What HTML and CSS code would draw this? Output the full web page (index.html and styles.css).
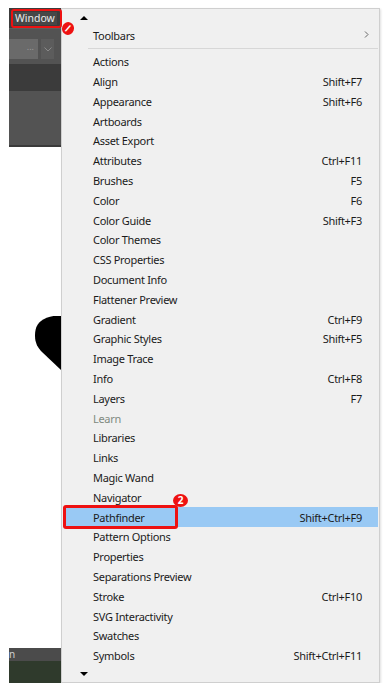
FILE: index.html
```html
<!DOCTYPE html>
<html lang="en">
<head>
    <meta charset="UTF-8">
    <meta name="viewport" content="width=device-width, initial-scale=1.0">
    <title>Window Menu</title>
    <link rel="stylesheet" href="styles.css">
</head>
<body>
    <div class="screen">
        <div class="app">
            <div class="app-top">
                <div class="menubar">
                    <span class="menubar-item">Window</span>
                </div>
                <div class="control-bar">
                    <div class="dropdown">...</div>
                    <div class="dropdown-caret">
                        <svg width="8" height="5" viewBox="0 0 8 5"><path d="M0.5 0.5 L4 4 L7.5 0.5" fill="none" stroke="#8a8a8a" stroke-width="1"/></svg>
                    </div>
                </div>
                <div class="dark-band"></div>
                <div class="panel-band"></div>
            </div>
            <div class="canvas">
                <svg class="heart" width="26" height="56" viewBox="0 0 26 56">
                    <path d="M26 0 C 19 -1 11 1 6 5 C 1 9 0 14 0 20 C 0 27 3 32 7 36 L 26 54 Z" fill="#000"/>
                </svg>
            </div>
            <div class="app-bottom">
                <div class="status-bar">n</div>
                <div class="dock"></div>
            </div>
        </div>

        <div class="menu">
            <div class="scroll-arrow"><span class="tri-up"></span></div>
            <div class="menu-item">
                <span class="label">Toolbars</span>
                <svg class="submenu" width="5" height="7" viewBox="0 0 5 7"><path d="M1 0.5 L4 3.5 L1 6.5" fill="none" stroke="#666" stroke-width="1"/></svg>
            </div>
            <div class="separator"></div>
            <div class="menu-item"><span class="label">Actions</span></div>
            <div class="menu-item"><span class="label">Align</span><span class="key">Shift+F7</span></div>
            <div class="menu-item"><span class="label">Appearance</span><span class="key">Shift+F6</span></div>
            <div class="menu-item"><span class="label">Artboards</span></div>
            <div class="menu-item"><span class="label">Asset Export</span></div>
            <div class="menu-item"><span class="label">Attributes</span><span class="key">Ctrl+F11</span></div>
            <div class="menu-item"><span class="label">Brushes</span><span class="key">F5</span></div>
            <div class="menu-item"><span class="label">Color</span><span class="key">F6</span></div>
            <div class="menu-item"><span class="label">Color Guide</span><span class="key">Shift+F3</span></div>
            <div class="menu-item"><span class="label">Color Themes</span></div>
            <div class="menu-item"><span class="label">CSS Properties</span></div>
            <div class="menu-item"><span class="label">Document Info</span></div>
            <div class="menu-item"><span class="label">Flattener Preview</span></div>
            <div class="menu-item"><span class="label">Gradient</span><span class="key">Ctrl+F9</span></div>
            <div class="menu-item"><span class="label">Graphic Styles</span><span class="key">Shift+F5</span></div>
            <div class="menu-item"><span class="label">Image Trace</span></div>
            <div class="menu-item"><span class="label">Info</span><span class="key">Ctrl+F8</span></div>
            <div class="menu-item"><span class="label">Layers</span><span class="key">F7</span></div>
            <div class="menu-item disabled"><span class="label">Learn</span></div>
            <div class="menu-item"><span class="label">Libraries</span></div>
            <div class="menu-item"><span class="label">Links</span></div>
            <div class="menu-item"><span class="label">Magic Wand</span></div>
            <div class="menu-item"><span class="label">Navigator</span></div>
            <div class="menu-item active"><span class="label">Pathfinder</span><span class="key">Shift+Ctrl+F9</span></div>
            <div class="menu-item"><span class="label">Pattern Options</span></div>
            <div class="menu-item"><span class="label">Properties</span></div>
            <div class="menu-item"><span class="label">Separations Preview</span></div>
            <div class="menu-item"><span class="label">Stroke</span><span class="key">Ctrl+F10</span></div>
            <div class="menu-item"><span class="label">SVG Interactivity</span></div>
            <div class="menu-item"><span class="label">Swatches</span></div>
            <div class="menu-item"><span class="label">Symbols</span><span class="key">Shift+Ctrl+F11</span></div>
            <div class="scroll-arrow"><span class="tri-down"></span></div>
        </div>

        <!-- red annotations drawn on top of the screenshot -->
        <div class="mark-box mark-window"></div>
        <div class="mark-dot mark-one"><span>/</span></div>
        <div class="mark-box mark-path"></div>
        <div class="mark-dot mark-two"><span>2</span></div>
    </div>
</body>
</html>
```

FILE: styles.css
```css
body {
    margin: 0;
    background: #fff;
    font-family: "Noto Sans", "Open Sans", sans-serif;
}

.screen {
    position: relative;
    display: flex;
    padding: 8px 0 0 9px;
}

/* background app */
.app {
    width: 52px;
    height: 675px;
    display: flex;
    flex-direction: column;
}

.app-top {
    display: flex;
    flex-direction: column;
    height: 139px;
    background: #535353;
}

.menubar {
    display: flex;
    align-items: flex-start;
    height: 21px;
    background: #3c3c3c;
    border-bottom: 1px solid #5e5e5e;
    padding: 4px 0 0 4px;
    box-sizing: border-box;
}

.menubar-item {
    font-size: 10.5px;
    line-height: 13px;
    color: #ececec;
    background: #474747;
    padding: 0 2px;
}

.control-bar {
    display: flex;
    gap: 3px;
    height: 35px;
    padding-top: 10px;
    box-sizing: border-box;
}

.dropdown {
    width: 29px;
    height: 20px;
    background: #6a6a6a;
    color: #9a9a9a;
    font-size: 9px;
    line-height: 16px;
    text-align: right;
    padding-right: 4px;
    box-sizing: border-box;
}

.dropdown-caret {
    width: 13px;
    height: 20px;
    background: #5c5c5c;
    display: flex;
    align-items: center;
    justify-content: center;
}

.dark-band {
    height: 27px;
    background: #3b3b3b;
}

.panel-band {
    flex: 1;
    border-bottom: 2px solid #3a3a3a;
}

.canvas {
    flex: 1;
    display: flex;
    justify-content: flex-end;
    align-items: flex-start;
}

.heart {
    margin-top: 169px;
}

.app-bottom {
    height: 35px;
    display: flex;
    flex-direction: column;
}

.status-bar {
    height: 13px;
    background: #4b4b4b;
    color: #cfcfcf;
    font-size: 10px;
    line-height: 13px;
}

.dock {
    flex: 1;
    background: #2f3a2c;
}

/* window menu */
.menu {
    width: 319px;
    height: 675px;
    background: #f0f0f0;
    border: 1px solid #cfcfcf;
    box-sizing: border-box;
    box-shadow: 1px 1px 2px rgba(0, 0, 0, 0.12);
}

.scroll-arrow {
    height: 17px;
    padding-left: 18px;
    display: flex;
    align-items: center;
}

.tri-up {
    width: 0;
    height: 0;
    border-left: 4px solid transparent;
    border-right: 4px solid transparent;
    border-bottom: 4px solid #000;
}

.tri-down {
    width: 0;
    height: 0;
    border-left: 4px solid transparent;
    border-right: 4px solid transparent;
    border-top: 4px solid #000;
}

.menu-item {
    display: flex;
    align-items: center;
    height: 19.8px;
    margin: 0 1px;
    padding: 0 16px 0 30px;
    font-size: 11px;
    letter-spacing: -0.3px;
    color: #1b1b1b;
}

.menu-item:first-of-type {
    height: 20px;
}

.label {
    flex: 1;
}

.submenu {
    margin: -2px -7px 0 0;
}

.disabled {
    color: #7f8a80;
}

.active {
    background: #99c9f4;
}

.separator {
    height: 6px;
    display: flex;
    align-items: center;
    padding: 0 1px 0 26px;
}

.separator::after {
    content: "";
    flex: 1;
    height: 1px;
    background: #d7d7d7;
}

/* annotations */
.mark-box {
    position: absolute;
    border: 2px solid #ee1111;
    border-radius: 3px;
}

.mark-window {
    left: 11px;
    top: 9px;
    width: 47px;
    height: 15px;
}

.mark-path {
    left: 63px;
    top: 505px;
    width: 109px;
    height: 18px;
    border-width: 3px;
}

.mark-dot {
    position: absolute;
    background: #ee1111;
    border-radius: 50%;
    color: #fff;
    font-weight: bold;
    text-align: center;
}

.mark-one {
    left: 62px;
    top: 22px;
    width: 12px;
    height: 13px;
    font-size: 10px;
    line-height: 13px;
    transform: rotate(20deg);
}

.mark-two {
    left: 173px;
    top: 494px;
    width: 15px;
    height: 13px;
    font-size: 10px;
    line-height: 13px;
}
```
